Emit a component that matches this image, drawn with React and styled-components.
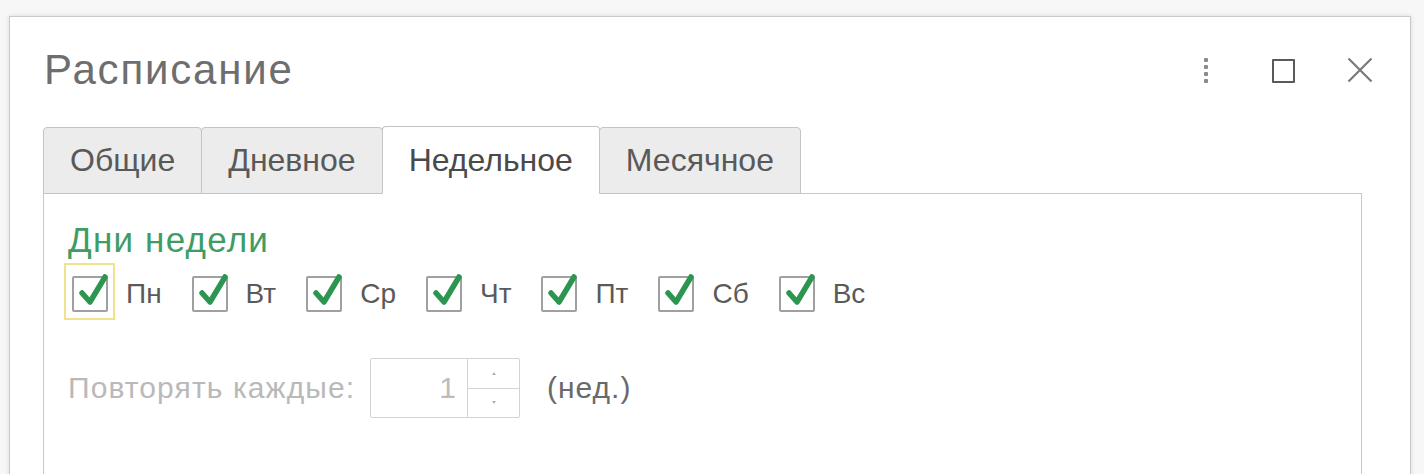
import React from "react";
import styled, { createGlobalStyle } from "styled-components";

const Global = createGlobalStyle`
  html, body { margin: 0; padding: 0; }
  body {
    background: #f7f7f7;
    font-family: "Liberation Sans", Arial, sans-serif;
    overflow: hidden;
  }
`;

const Page = styled.div`
  padding: 16px 13px 0 9px;
  height: 474px;
  box-sizing: border-box;
`;

const Window = styled.div`
  background: #fff;
  border: 1px solid #c9c9c9;
  box-shadow: 0 0 5px rgba(0, 0, 0, 0.12);
  min-height: 520px;
  padding-left: 33px;
  box-sizing: border-box;
`;

const Header = styled.div`
  display: flex;
  align-items: center;
  height: 109px;
  padding-right: 30px;
  padding-left: 1px;
`;

const Title = styled.h1`
  margin: 0 0 4px 0;
  font-weight: normal;
  font-size: 42px;
  color: #6e6e6e;
  flex: 1;
  letter-spacing: 1.8px;
`;

const Tools = styled.div`
  display: flex;
  align-items: center;
  gap: 37px;
`;

const IconButton = styled.button`
  width: 40px;
  height: 40px;
  border: none;
  background: none;
  padding: 0;
  display: flex;
  align-items: center;
  justify-content: center;
  cursor: pointer;
`;

const Dots = styled.span`
  display: flex;
  flex-direction: column;
  gap: 3px;
  margin-top: -3px;
  & > i {
    display: block;
    width: 4px;
    height: 4px;
    border-radius: 1px;
    background: #8a8a8a;
  }
`;

const MaxBox = styled.span`
  width: 19px;
  height: 20px;
  margin-top: -2px;
  border: 2.5px solid #5a5a5a;
  border-radius: 1px;
`;

const TabBar = styled.div`
  display: flex;
  align-items: flex-end;
  position: relative;
  z-index: 1;
  margin-bottom: -1px;
`;

const Tab = styled.div`
  display: flex;
  align-items: center;
  padding: 0 26px;
  box-sizing: border-box;
  border: 1px solid #c4c4c4;
  border-bottom: ${(p) => (p.$active ? "1px solid #fff" : "1px solid #c4c4c4")};
  border-radius: 4px 4px 0 0;
  margin-left: -1px;
  background: ${(p) => (p.$active ? "#fff" : "#ececec")};
  color: ${(p) => (p.$active ? "#4a4a4a" : "#595959")};
  font-size: 32px;
  height: ${(p) => (p.$active ? "68px" : "67px")};
  &:first-child { margin-left: 0; }
`;

const Panel = styled.div`
  margin-right: 48px;
  border: 1px solid #c8c8c8;
  border-bottom: none;
  background: #fff;
  min-height: 320px;
  padding: 27px 24px 0 24px;
`;

const GroupTitle = styled.div`
  font-size: 35px;
  letter-spacing: 1.2px;
  color: #3f9c62;
  line-height: 38px;
`;

const DaysRow = styled.div`
  display: flex;
  align-items: center;
  gap: 30px;
  margin-top: 17px;
  padding-left: 4px;
`;

const DayItem = styled.label`
  display: flex;
  align-items: center;
  gap: 18px;
  font-size: 28px;
  color: #5a5a5a;
  position: relative;
  ${(p) =>
    p.$focused &&
    `
    &::before {
      content: "";
      position: absolute;
      left: -8px;
      top: -13px;
      width: 51px;
      height: 57px;
      border: 2px solid #efe48e;
      box-sizing: border-box;
    }
  `}
`;

const Box = styled.span`
  position: relative;
  width: 36px;
  height: 36px;
  box-sizing: border-box;
  border: 2px solid #a0a0a0;
  border-radius: 2px;
  background: #fff;
  flex: none;
  & > svg {
    position: absolute;
    left: 2px;
    top: -7px;
  }
`;

const RepeatRow = styled.div`
  display: flex;
  align-items: center;
  margin-top: 46px;
`;

const MutedLabel = styled.span`
  font-size: 30px;
  letter-spacing: 1.1px;
  color: #b9b9b9;
  width: 302px;
`;

const Spin = styled.div`
  display: flex;
  width: 150px;
  height: 60px;
  box-sizing: border-box;
  border: 1px solid #d3d3d3;
  border-radius: 2px;
`;

const SpinValue = styled.div`
  flex: 1;
  display: flex;
  align-items: center;
  justify-content: flex-end;
  padding-right: 11px;
  font-size: 30px;
  color: #bcbcbc;
  border-right: 1px solid #d3d3d3;
`;

const SpinButtons = styled.div`
  width: 51px;
  display: flex;
  flex-direction: column;
`;

const SpinButton = styled.div`
  flex: 1;
  display: flex;
  align-items: center;
  justify-content: center;
  border-top: ${(p) => (p.$down ? "1px solid #d3d3d3" : "none")};
  & > i {
    display: block;
    width: 0;
    height: 0;
    border-left: 2px solid transparent;
    border-right: 2px solid transparent;
    ${(p) =>
      p.$down
        ? "border-top: 3px solid #b0b0b0;"
        : "border-bottom: 3px solid #b0b0b0;"}
  }
`;

const Unit = styled.span`
  font-size: 30px;
  letter-spacing: 1px;
  color: #6a6a6a;
  margin-left: 27px;
`;

const Check = () => (
  <svg width="36" height="38" viewBox="0 0 36 38">
    <path
      d="M6 22 L14 31 L29 6"
      fill="none"
      stroke="#2c9550"
      strokeWidth="5.5"
      strokeLinecap="round"
      strokeLinejoin="round"
    />
  </svg>
);

const days = ["Пн", "Вт", "Ср", "Чт", "Пт", "Сб", "Вс"];
const tabs = ["Общие", "Дневное", "Недельное", "Месячное"];

export default function App() {
  return (
    <Page>
      <Global />
      <Window>
        <Header>
          <Title>Расписание</Title>
          <Tools>
            <IconButton aria-label="Ещё">
              <Dots>
                <i />
                <i />
                <i />
                <i />
              </Dots>
            </IconButton>
            <IconButton aria-label="Развернуть">
              <MaxBox />
            </IconButton>
            <IconButton aria-label="Закрыть">
              <svg width="26" height="26" viewBox="0 0 26 26" style={{ marginTop: -3 }}>
                <path
                  d="M1.5 1.5 L24.5 24.5 M24.5 1.5 L1.5 24.5"
                  stroke="#7a7a7a"
                  strokeWidth="2.2"
                  fill="none"
                />
              </svg>
            </IconButton>
          </Tools>
        </Header>
        <TabBar>
          {tabs.map((t) => (
            <Tab key={t} $active={t === "Недельное"}>
              {t}
            </Tab>
          ))}
        </TabBar>
        <Panel>
          <GroupTitle>Дни недели</GroupTitle>
          <DaysRow>
            {days.map((d, i) => (
              <DayItem key={d} $focused={i === 0}>
                <Box>
                  <Check />
                </Box>
                {d}
              </DayItem>
            ))}
          </DaysRow>
          <RepeatRow>
            <MutedLabel>Повторять каждые:</MutedLabel>
            <Spin>
              <SpinValue>1</SpinValue>
              <SpinButtons>
                <SpinButton>
                  <i />
                </SpinButton>
                <SpinButton $down>
                  <i />
                </SpinButton>
              </SpinButtons>
            </Spin>
            <Unit>(нед.)</Unit>
          </RepeatRow>
        </Panel>
      </Window>
    </Page>
  );
}
